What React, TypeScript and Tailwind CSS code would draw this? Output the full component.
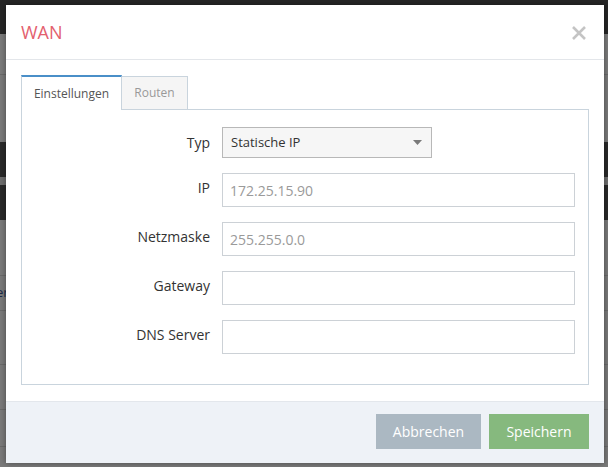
import React from "react";

const font = { fontFamily: '"Open Sans", "Noto Sans", sans-serif' };

function Row({ label, children, raise = true }: { label: string; children: React.ReactNode; raise?: boolean }) {
  return (
    <div className="flex items-center">
      <div className={raise ? "w-[200px] pr-[12px] mb-[5px] text-right text-[14px] text-[#333]" : "w-[200px] pr-[12px] text-right text-[14px] text-[#333]"}>{label}</div>
      {children}
    </div>
  );
}

function Input({ value }: { value?: string }) {
  return (
    <div className="w-[353px] h-[34px] border border-[#ccd1d6] bg-white flex items-center px-[7px] text-[14px] text-[#9a9a9a]">
      {value}
    </div>
  );
}

export default function App() {
  return (
    <div className="relative w-[608px] h-[467px] overflow-hidden bg-[#7a7a7a]" style={font}>
      {/* backdrop page */}
      <div className="flex flex-col">
        <div className="h-[34px] bg-[#262626]" />
        <div className="h-[41px] bg-[#7b7b7b] border-b border-[#6a6a6a]" />
        <div className="h-[67px] bg-[#7a7a7a]" />
        <div className="h-[35px] bg-[#2a2a2a]" />
        <div className="h-[8px] bg-[#6e6e6e]" />
        <div className="h-[35px] bg-[#2a2a2a]" />
        <div className="h-[56px] bg-[#7a7a7a] border-b border-[#6a6a6a]" />
        <div className="h-[35px] bg-[#7a7a7a] border-b border-[#6a6a6a] text-[13px] text-[#1c2a4a] pl-0 flex items-center -ml-[4px]">er</div>
        <div className="h-[54px] bg-[#7a7a7a] border-b border-[#6a6a6a]" />
        <div className="h-[45px] bg-[#7a7a7a] border-b border-[#6a6a6a]" />
        <div className="h-[37px] bg-[#7a7a7a] border-b border-[#6a6a6a]" />
      </div>

      {/* modal */}
      <div className="absolute left-[6px] top-[5px] w-[598px] h-[458px] bg-white flex flex-col shadow-[0_0_6px_rgba(0,0,0,0.4)]">
        <div className="h-[55px] flex items-center justify-between pl-[15px] pr-[17px] border-b border-[#e3e6ea]">
          <div className="text-[18px] text-[#e3606e]">WAN</div>
          <svg width="16" height="16" viewBox="0 0 16 16" className="mt-[1px]">
            <path d="M2 2 L14 14 M14 2 L2 14" stroke="#c4c4c4" strokeWidth="2.6" />
          </svg>
        </div>

        <div className="flex-1 pt-[15px] px-[15px]">
          <div className="flex h-[35px]">
            <div className="w-[101px] border-t-2 border-t-[#4a8fc8] border-l border-r border-[#c9d4dd] bg-white text-[12px] text-[#555] flex items-center justify-center relative z-10 h-[35px]">
              Einstellungen
            </div>
            <div className="w-[66px] mt-[1px] border-t border-r border-[#c9d4dd] bg-[#f5f5f5] text-[12px] text-[#999] flex items-center justify-center h-[33px]">
              Routen
            </div>
          </div>
          <div className="-mt-px h-[276px] border border-[#c9d4dd] flex flex-col gap-[15px] pt-[17px]">
            <Row label="Typ" raise={false}>
              <div className="w-[210px] h-[31px] border border-[#b8b8b8] bg-[#f6f6f6] flex items-center justify-between pl-[8px] pr-[9px] text-[13px] text-[#333]">
                <span>Statische IP</span>
                <svg width="9" height="5" viewBox="0 0 9 5">
                  <path d="M0 0 H9 L4.5 5 Z" fill="#7a7a7a" />
                </svg>
              </div>
            </Row>
            <Row label="IP">
              <Input value="172.25.15.90" />
            </Row>
            <Row label="Netzmaske">
              <Input value="255.255.0.0" />
            </Row>
            <Row label="Gateway">
              <Input />
            </Row>
            <Row label="DNS Server">
              <Input />
            </Row>
          </div>
        </div>

        <div className="h-[62px] bg-[#eef2f7] border-t border-[#e3e7ec] flex items-start justify-end gap-[8px] pt-[12px] pr-[15px]">
          <div className="w-[105px] h-[35px] bg-[#abb8c2] text-white text-[14px] flex items-center justify-center">
            Abbrechen
          </div>
          <div className="w-[100px] h-[35px] bg-[#86b97e] text-white text-[14px] flex items-center justify-center">
            Speichern
          </div>
        </div>
      </div>
    </div>
  );
}
